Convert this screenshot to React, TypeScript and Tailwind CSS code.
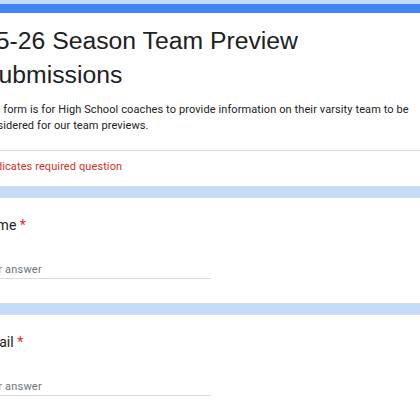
export default function App() {
  const questions = [
    { label: "Name", placeholder: "Your answer" },
    { label: "Email", placeholder: "Your answer" },
  ];

  return (
    <div className="w-[420px] h-[420px] overflow-hidden bg-[#c6dafc] font-['Roboto',sans-serif]">
      <div className="h-[4px]" />
      <div className="-ml-[46px] w-[488px] flex flex-col gap-[10px]">
        {/* header card */}
        <div className="bg-white rounded-lg border border-[#dadce0] border-t-[9px] border-t-[#4285f4]">
          <div className="px-[24px] pt-[11px]">
            <h1 className="ml-[3px] text-[24.75px] leading-[34px] text-[#202124] font-['Liberation_Sans',Arial,sans-serif]">
              25-26 Season Team Preview Submissions
            </h1>
            <p className="mt-[10px] text-[11px] leading-[16px] text-[#202124] tracking-[0.1px]">
              This form is for High School coaches to provide information on their varsity team to be
              considered for our team previews.
            </p>
          </div>
          <div className="mt-[16px] h-px bg-[#dadce0]" />
          <div className="px-[24px] pt-[8px] pb-[12px] text-[11px] leading-[15px] text-[#d93025] tracking-[0.1px]">
            * Indicates required question
          </div>
        </div>

        {questions.map((q) => (
          <div
            key={q.label}
            className="bg-white rounded-lg border border-[#dadce0] px-[24px] pt-[17px] pb-[24px]"
          >
            <div className="text-[14px] leading-[20px] text-[#202124]">
              {q.label} <span className="text-[#d93025]">*</span>
            </div>
            <div className="mt-[27px] w-[232px] border-b border-[#dadce0] pb-[1px] text-[11px] leading-[15px] text-[#70757a] tracking-[0.2px]">
              {q.placeholder}
            </div>
          </div>
        ))}
      </div>
    </div>
  );
}
